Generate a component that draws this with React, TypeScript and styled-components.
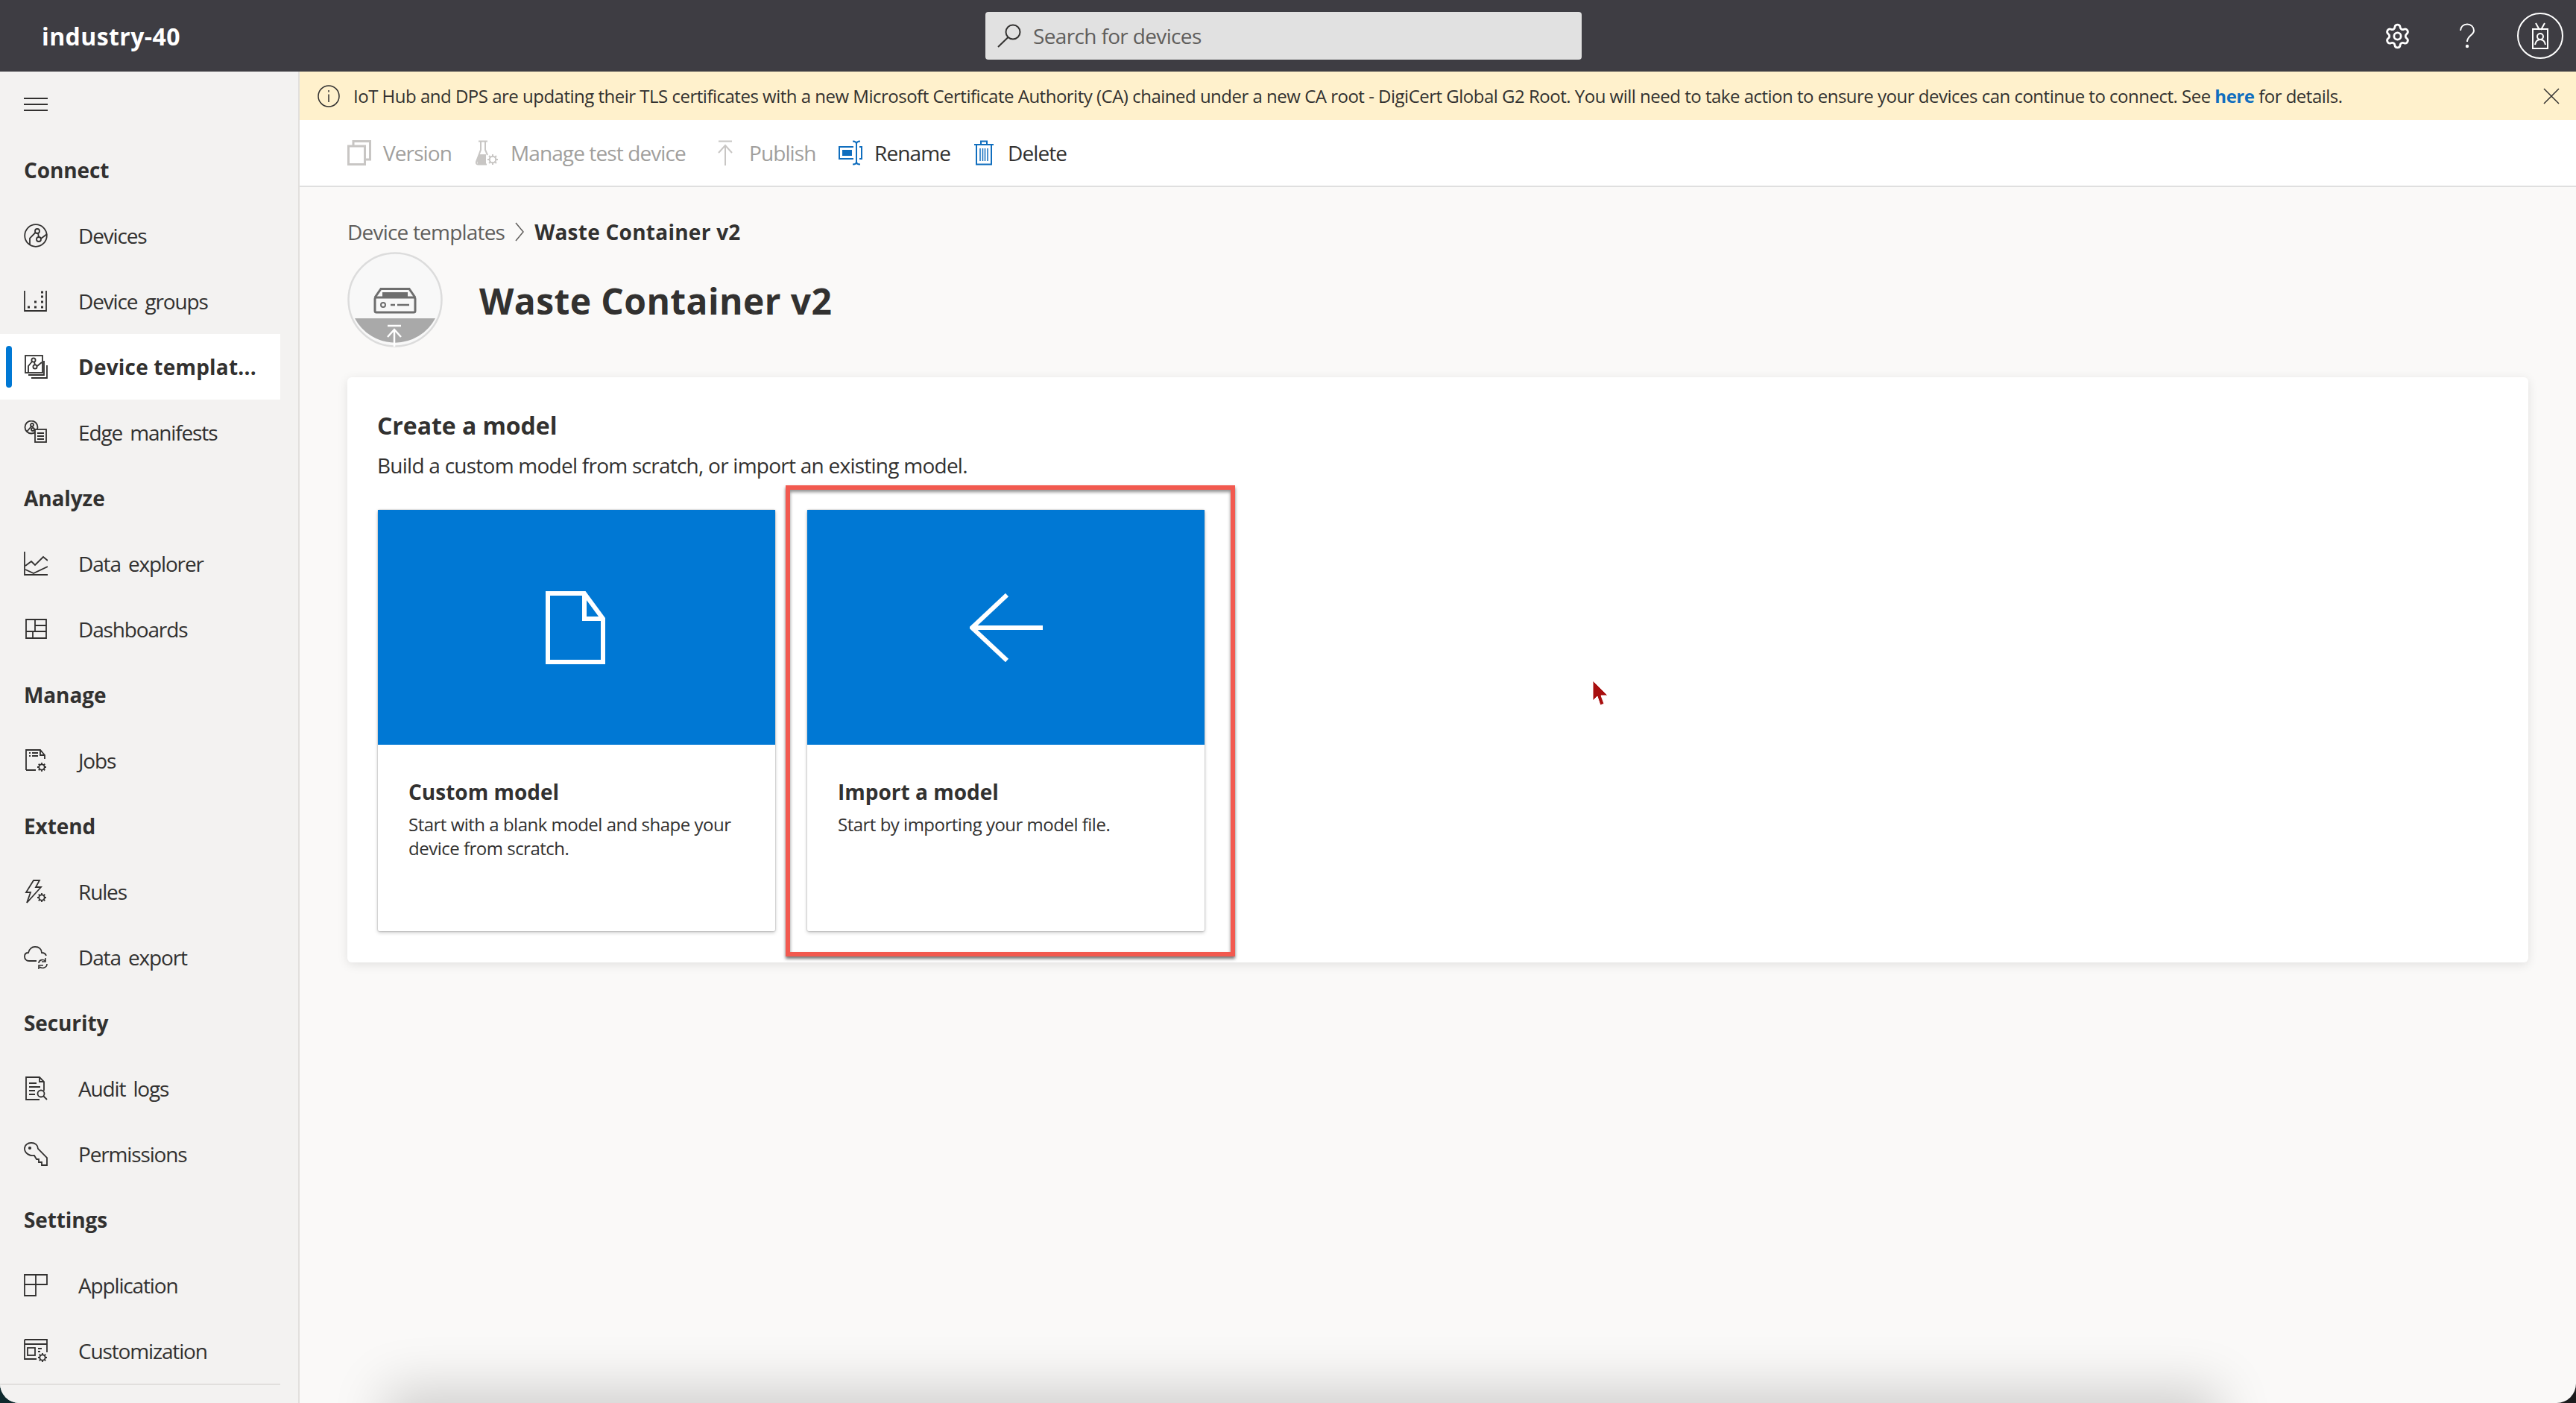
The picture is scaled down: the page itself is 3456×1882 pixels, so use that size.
import React from "react";
import styled, { createGlobalStyle } from "styled-components";
import { Settings } from "lucide-react";

const FONT = `"Open Sans", "Noto Sans", "Liberation Sans", sans-serif`;

const GlobalStyle = createGlobalStyle`
  html, body {
    margin: 0;
    padding: 0;
    width: 3456px;
    height: 1882px;
    overflow: hidden;
    background: linear-gradient(90deg, #0f2a2e 0%, #1c1b1d 100%);
  }
  * { box-sizing: border-box; }
`;

// little gear used by a few of the nav icons
function Cog({ cx, cy, r }: { cx: number; cy: number; r: number }) {
  const spokes = [0, 45, 90, 135];
  return (
    <g>
      <circle cx={cx} cy={cy} r={r * 0.62} fill="none" />
      {spokes.map((a) => {
        const dx = Math.cos((a * Math.PI) / 180) * r;
        const dy = Math.sin((a * Math.PI) / 180) * r;
        return <line key={a} x1={cx - dx} y1={cy - dy} x2={cx + dx} y2={cy + dy} strokeDasharray={`${r * 0.5} ${r}`} />;
      })}
    </g>
  );
}

function NavSvg({ children }: { children: React.ReactNode }) {
  return (
    <svg width="32" height="32" viewBox="0 0 32 32" fill="none" stroke="#323130" strokeWidth="1.8">
      {children}
    </svg>
  );
}

const DevicesIcon = () => (
  <NavSvg>
    <circle cx="16" cy="16" r="14.8" />
    <circle cx="18" cy="10" r="3" />
    <circle cx="20" cy="21" r="3" />
    <path d="M8 29V19.5L15.5 12M19 13l1 5M23 20l8-6" />
  </NavSvg>
);
const GroupsIcon = () => (
  <NavSvg>
    <path d="M1 2V29H30V2" />
    <path d="M5 24h3M14 24h3M14 17h3M23 24h3M23 17h3M23 10h3M23 4h3" strokeWidth="3" />
  </NavSvg>
);
const TemplatesIcon = () => (
  <NavSvg>
    <rect x="2" y="1" width="23" height="23" />
    <circle cx="13" cy="7" r="2.6" />
    <circle cx="15" cy="16" r="2.6" />
    <path d="M6 24V15L11 9M14 10l1 3.500M18 15l6-5M27 8V27H6M31 14V31H10" />
  </NavSvg>
);
const EdgeIcon = () => (
  <NavSvg>
    <circle cx="10" cy="9" r="8.5" />
    <circle cx="11" cy="6" r="2" />
    <circle cx="12" cy="12" r="2" />
    <path d="M4 15l6-7" />
    <rect x="15" y="12" width="15" height="17" fill="#f3f2f1" />
    <path d="M18 17h9M18 21h9M18 25h9" />
  </NavSvg>
);
const ExplorerIcon = () => (
  <NavSvg>
    <path d="M1 0V31H32" />
    <path d="M2 19l8-6 5 5 11-11 6 5" />
    <path d="M2 24l11 5 19-9" />
  </NavSvg>
);
const DashboardsIcon = () => (
  <NavSvg>
    <path d="M3 3H30V28H3ZM3 19H30M15 3V19M15 11H30M12 19V28" />
  </NavSvg>
);
const JobsIcon = () => (
  <NavSvg>
    <path d="M3 29V2H22L28 9V14M3 29H16M22 2V9H28" />
    <path d="M7 6h2M7 10h2M11 6h8M11 10h8" />
    <Cog cx={24} cy={25} r={6} />
  </NavSvg>
);
const RulesIcon = () => (
  <NavSvg>
    <path d="M13 1H21L16 10H23L4 31L9 17H3Z" />
    <Cog cx={24} cy={24} r={6} />
  </NavSvg>
);
const ExportIcon = () => (
  <NavSvg>
    <path d="M17 21H7C3 21 1 18 1 15C1 12 3 10 6 10C7 5 11 2 15 2C20 2 24 5 24 10C27 10 29 11 30 14" />
    <path d="M20 24C20 20 25 18 29 21M31 25C31 30 25 32 21 29M29 17V22H24M20 33V27H26" strokeWidth="1.6" />
  </NavSvg>
);
const AuditIcon = () => (
  <NavSvg>
    <path d="M27 19V7L21 1H3V31H21M21 1V7H27" />
    <path d="M7 9H17M7 14H22M7 19H15M7 24H15" />
    <circle cx="23" cy="23" r="4.5" />
    <path d="M26 26l5 5" />
  </NavSvg>
);
const KeyIcon = () => (
  <NavSvg>
    <path d="M1 9C1 4 5 1 10 1C15 1 19 4 19 9L31 21V31H24V27H20V23H17L14 18C8 19 1 15 1 9Z" />
    <circle cx="8" cy="8" r="1.200" fill="#323130" />
  </NavSvg>
);
const ApplicationIcon = () => (
  <NavSvg>
    <path d="M1 2H31V15H16V30H1ZM1 15H16M16 2V15" />
  </NavSvg>
);
const CustomizationIcon = () => (
  <NavSvg>
    <path d="M1 1H31V18M1 1V27H17M1 7H31" />
    <rect x="5" y="12" width="10" height="10" />
    <path d="M19 13h5M19 17h3" />
    <Cog cx={25} cy={25} r={6} />
  </NavSvg>
);

type NavEntry =
  | { heading: string }
  | { label: string; icon: React.ComponentType; active?: boolean };

const NAV: NavEntry[] = [
  { heading: "Connect" },
  { label: "Devices", icon: DevicesIcon },
  { label: "Device groups", icon: GroupsIcon },
  { label: "Device templat...", icon: TemplatesIcon, active: true },
  { label: "Edge manifests", icon: EdgeIcon },
  { heading: "Analyze" },
  { label: "Data explorer", icon: ExplorerIcon },
  { label: "Dashboards", icon: DashboardsIcon },
  { heading: "Manage" },
  { label: "Jobs", icon: JobsIcon },
  { heading: "Extend" },
  { label: "Rules", icon: RulesIcon },
  { label: "Data export", icon: ExportIcon },
  { heading: "Security" },
  { label: "Audit logs", icon: AuditIcon },
  { label: "Permissions", icon: KeyIcon },
  { heading: "Settings" },
  { label: "Application", icon: ApplicationIcon },
  { label: "Customization", icon: CustomizationIcon },
];

export default function App() {
  return (
    <>
      <GlobalStyle />
      <Frame>
        <TopBar>
          <Brand>industry-40</Brand>
          <SearchBox>
            <svg width="36" height="32" viewBox="0 0 36 32" fill="none" stroke="#323130" strokeWidth="2">
              <circle cx="22" cy="11" r="9.500" />
              <path d="M15.500 18L2 31" />
            </svg>
            <SearchText>Search for devices</SearchText>
          </SearchBox>
          <TopActions>
            <Settings size={37} color="#fff" strokeWidth={1.8} />
            <svg width="22" height="34" viewBox="0 0 22 34" fill="none" stroke="#fff" strokeWidth="2">
              <path d="M2 10C2 5 6 1.500 11 1.500C16 1.500 20 5 20 10C20 16 11 17 11 25" />
              <circle cx="11" cy="31" r="1.200" fill="#fff" />
            </svg>
            <Avatar>
              <svg width="24" height="36" viewBox="0 0 24 36" fill="none" stroke="#fff" strokeWidth="2">
                <path d="M2 9H22V35H2ZM6 1l5 9M18 1l-5 9" />
                <circle cx="12" cy="19" r="4" />
                <path d="M5 30c1-5 4-7 7-7s6 2 7 7" />
              </svg>
            </Avatar>
          </TopActions>
        </TopBar>

        <Body>
          <Sidebar>
            <MenuRow>
              <svg width="32" height="20" viewBox="0 0 32 20" stroke="#323130" strokeWidth="2">
                <path d="M0 2H32M0 10H32M0 18H32" />
              </svg>
            </MenuRow>
            {NAV.map((entry) =>
              "heading" in entry ? (
                <NavHeading key={entry.heading}>{entry.heading}</NavHeading>
              ) : (
                <NavItem key={entry.label} $active={entry.active}>
                  <NavIconBox>
                    <entry.icon />
                  </NavIconBox>
                  <NavLabel $active={entry.active}>{entry.label}</NavLabel>
                </NavItem>
              )
            )}
            <NavDivider />
          </Sidebar>

          <Main>
            <Banner>
              <svg width="30" height="30" viewBox="0 0 30 30" fill="none" stroke="#323130" strokeWidth="1.500">
                <circle cx="15" cy="15" r="14" />
                <path d="M15 12.500V23M15 7V9.500" />
              </svg>
              <BannerText>
                IoT Hub and DPS are updating their TLS certificates with a new Microsoft Certificate Authority (CA)
                chained under a new CA root - DigiCert Global G2 Root. You will need to take action to ensure your
                devices can continue to connect. See <BannerLink>here</BannerLink> for details.
              </BannerText>
              <BannerClose>
                <svg width="22" height="22" viewBox="0 0 22 22" stroke="#323130" strokeWidth="1.500">
                  <path d="M1 1L21 21M21 1L1 21" />
                </svg>
              </BannerClose>
            </Banner>

            <Toolbar>
              <ToolButton $disabled>
                <ToolIcon>
                  <svg width="32" height="34" viewBox="0 0 32 34" fill="none" stroke="#c8c6c4" strokeWidth="3">
                    <rect x="1.500" y="8" width="22" height="24.500" />
                    <path d="M8 7V1.500H30.500V26H25" />
                  </svg>
                </ToolIcon>
                <ToolLabel $width={91}>Version</ToolLabel>
              </ToolButton>
              <ToolButton $disabled>
                <ToolIcon>
                  <svg width="32" height="34" viewBox="0 0 32 34" fill="none" stroke="#c8c6c4" strokeWidth="2">
                    <path d="M5 1.500H17M8 2V13L2 29C1.500 31 2.500 32.500 4 32.500H16M14 2V13L17 20" />
                    <path d="M2.500 26L6 19H15V32H4Z" fill="#c8c6c4" stroke="none" />
                    <g stroke="#c8c6c4">
                      <Cog cx={24} cy={26} r={7} />
                    </g>
                  </svg>
                </ToolIcon>
                <ToolLabel $width={240}>Manage test device</ToolLabel>
              </ToolButton>
              <ToolButton $disabled>
                <ToolIcon>
                  <svg width="32" height="34" viewBox="0 0 32 34" fill="none" stroke="#c8c6c4" strokeWidth="2">
                    <path d="M7 1.500H25M16 34V8M7 17L16 7L25 17" />
                  </svg>
                </ToolIcon>
                <ToolLabel $width={88}>Publish</ToolLabel>
              </ToolButton>
              <ToolButton>
                <ToolIcon>
                  <svg width="32" height="34" viewBox="0 0 32 34" fill="none" stroke="#106ebe" strokeWidth="2">
                    <path d="M20 9H1V25H20M28 9H31V25H28" />
                    <rect x="5" y="13" width="13" height="8" fill="#106ebe" stroke="none" />
                    <path d="M19 1.500C22 1.500 24 3 24 5V29C24 31 22 32.500 19 32.500M29 1.500C26 1.500 24 3 24 5M29 32.500C26 32.500 24 31 24 29" />
                  </svg>
                </ToolIcon>
                <ToolLabel $width={99}>Rename</ToolLabel>
              </ToolButton>
              <ToolButton>
                <ToolIcon>
                  <svg width="32" height="34" viewBox="0 0 32 34" fill="none" stroke="#106ebe" strokeWidth="2">
                    <path d="M3 6H29M12 6V1.500H20V6M6 6V32.500H26V6" />
                    <path d="M11 11V28M14.500 11V28M17.500 11V28M21 11V28" strokeWidth="1.500" />
                  </svg>
                </ToolIcon>
                <ToolLabel $width={80}>Delete</ToolLabel>
              </ToolButton>
            </Toolbar>

            <Content>
              <Breadcrumb>
                <CrumbLink>Device templates</CrumbLink>
                <svg width="14" height="26" viewBox="0 0 14 26" fill="none" stroke="#605e5c" strokeWidth="1.500">
                  <path d="M2 1L12 13L2 25" />
                </svg>
                <CrumbCurrent>Waste Container v2</CrumbCurrent>
              </Breadcrumb>

              <TitleRow>
                <svg width="128" height="128" viewBox="0 0 128 128" fill="none">
                  <circle cx="64" cy="64" r="62.500" fill="#f8f8f8" stroke="#dcdcdc" strokeWidth="2.500" />
                  <path d="M10 89H118A61 61 0 0 1 10 89Z" fill="#a9a9a9" />
                  <g stroke="#6e6e6e" strokeWidth="3">
                    <rect x="37" y="61" width="54" height="20" rx="2" />
                    <path d="M37 61L45 49.500H83L91 61" />
                  </g>
                  <path d="M47 54H81V61H47Z" fill="#6e6e6e" />
                  <circle cx="48" cy="71" r="3" stroke="#6e6e6e" strokeWidth="2" />
                  <path d="M58 71H64M67 71H83" stroke="#6e6e6e" strokeWidth="2.500" />
                  <path d="M54 99H72M63 127V104M54 114L63 104L72 114" stroke="#fff" strokeWidth="2.500" />
                </svg>
                <PageTitle>Waste Container v2</PageTitle>
              </TitleRow>

              <Card>
                <CardTitle>Create a model</CardTitle>
                <CardSubtitle>Build a custom model from scratch, or import an existing model.</CardSubtitle>
                <TileRow>
                  <Tile>
                    <TileArt>
                      <FileGlyph>
                        <svg width="80" height="98" viewBox="0 0 80 98" fill="none" stroke="#fff" strokeWidth="6">
                          <path d="M3 3H52L77 37V95H3ZM52 3V37H77" />
                        </svg>
                      </FileGlyph>
                    </TileArt>
                    <TileBody>
                      <TileTitle>Custom model</TileTitle>
                      <TileText>Start with a blank model and shape your device from scratch.</TileText>
                    </TileBody>
                  </Tile>
                  <Tile>
                    <TileArt>
                      <svg width="98" height="92" viewBox="0 0 98 92" fill="none" stroke="#fff" strokeWidth="6">
                        <path d="M98 46H4M50 2L3 46L50 90" />
                      </svg>
                    </TileArt>
                    <TileBody>
                      <TileTitle>Import a model</TileTitle>
                      <TileText>Start by importing your model file.</TileText>
                    </TileBody>
                    <Highlight />
                  </Tile>
                </TileRow>
              </Card>

              <Cursor>
                <svg width="24" height="36" viewBox="0 0 24 36">
                  <path d="M2 1V28L8 22L12 34L17 32L13 21H22Z" fill="#a80f0f" stroke="#fff" strokeWidth="1" />
                </svg>
              </Cursor>
            </Content>
            <BottomShade />
          </Main>
        </Body>
      </Frame>
    </>
  );
}

const Frame = styled.div`
  width: 3456px;
  height: 1882px;
  display: flex;
  flex-direction: column;
  overflow: hidden;
  border-radius: 0 0 26px 26px;
  background: #faf9f8;
  font-family: ${FONT};
  color: #323130;
`;

const TopBar = styled.header`
  height: 96px;
  flex: none;
  display: grid;
  grid-template-columns: 1322px 800px 1fr;
  align-items: center;
  background: #3e3d43;
`;

const Brand = styled.div`
  padding-left: 56px;
  font-size: 32px;
  font-weight: 700;
  letter-spacing: 0.4px;
  color: #fff;
`;

const SearchBox = styled.div`
  height: 64px;
  display: flex;
  align-items: center;
  gap: 13px;
  padding-left: 15px;
  background: #e1e1e1;
  border-radius: 4px;
`;

const SearchText = styled.span`
  font-size: 28px;
  letter-spacing: -0.65px;
  color: #605e5c;
`;

const TopActions = styled.div`
  display: flex;
  align-items: center;
  justify-content: flex-end;
  gap: 64px;
  padding-right: 17px;
`;

const Avatar = styled.div`
  width: 62px;
  height: 62px;
  margin-left: -8px;
  display: flex;
  align-items: center;
  justify-content: center;
  border: 2px solid #fff;
  border-radius: 50%;
`;

const Body = styled.div`
  flex: 1;
  min-height: 0;
  display: flex;
`;

const Sidebar = styled.nav`
  width: 402px;
  flex: none;
  background: #f3f2f1;
  border-right: 2px solid #e1dfdd;
`;

const MenuRow = styled.div`
  height: 88px;
  width: 376px;
  display: flex;
  align-items: center;
  padding-left: 32px;
`;

const NavHeading = styled.div`
  height: 88px;
  width: 376px;
  display: flex;
  align-items: center;
  padding-left: 32px;
  font-size: 28px;
  font-weight: 700;
  letter-spacing: -0.1px;
`;

const NavItem = styled.div<{ $active?: boolean }>`
  position: relative;
  height: 88px;
  width: 376px;
  display: flex;
  align-items: center;
  padding-left: 32px;
  background: ${(p) => (p.$active ? "#fff" : "transparent")};

  &::before {
    content: "";
    display: ${(p) => (p.$active ? "block" : "none")};
    position: absolute;
    left: 8px;
    top: 16px;
    width: 8px;
    height: 56px;
    border-radius: 4px;
    background: #0078d4;
  }
`;

const NavIconBox = styled.span`
  width: 32px;
  height: 32px;
  flex: none;
  display: flex;
`;

const NavLabel = styled.span<{ $active?: boolean }>`
  margin-left: 41px;
  font-size: 28px;
  font-weight: ${(p) => (p.$active ? 700 : 400)};
  letter-spacing: ${(p) => (p.$active ? "0.2px" : "-1.15px")};
  word-spacing: ${(p) => (p.$active ? "0" : "4px")};
  white-space: nowrap;
`;

const NavDivider = styled.div`
  width: 376px;
  height: 2px;
  background: #e1dfdd;
`;

const Main = styled.main`
  position: relative;
  flex: 1;
  min-width: 0;
  display: flex;
  flex-direction: column;
  overflow: hidden;
`;

const Banner = styled.div`
  height: 65px;
  flex: none;
  display: flex;
  align-items: center;
  padding-left: 24px;
  background: #fff1cc;
`;

const BannerText = styled.div`
  margin-left: 18px;
  font-size: 24px;
  letter-spacing: -0.5px;
  white-space: nowrap;
`;

const BannerLink = styled.span`
  font-weight: 700;
  color: #106ebe;
`;

const BannerClose = styled.span`
  margin-left: auto;
  margin-right: 22px;
  display: flex;
`;

const Toolbar = styled.div`
  height: 90px;
  flex: none;
  display: flex;
  align-items: center;
  gap: 32px;
  padding-left: 64px;
  background: #fff;
  border-bottom: 2px solid #dfdfdf;
`;

const ToolButton = styled.div<{ $disabled?: boolean }>`
  display: flex;
  align-items: center;
  gap: 16px;
  color: ${(p) => (p.$disabled ? "#a19f9d" : "#323130")};
`;

const ToolIcon = styled.span`
  width: 32px;
  height: 34px;
  display: flex;
`;

const ToolLabel = styled.span<{ $width: number }>`
  width: ${(p) => p.$width}px;
  font-size: 28px;
  letter-spacing: -0.9px;
  white-space: nowrap;
`;

const Content = styled.div`
  position: relative;
  flex: 1;
  padding: 42px 64px 0;
`;

const Breadcrumb = styled.div`
  height: 36px;
  display: flex;
  align-items: center;
  gap: 13px;
  font-size: 28px;
`;

const CrumbLink = styled.span`
  letter-spacing: -0.8px;
  color: #605e5c;
`;

const CrumbCurrent = styled.span`
  font-weight: 700;
  letter-spacing: 0.25px;
`;

const TitleRow = styled.div`
  margin-top: 9px;
  height: 128px;
  display: flex;
  align-items: center;
  gap: 49px;
`;

const PageTitle = styled.h1`
  margin: 2px 0 0;
  font-size: 48px;
  font-weight: 700;
  letter-spacing: 0.4px;
`;

const Card = styled.section`
  margin-top: 40px;
  height: 785px;
  padding: 45px 40px 0;
  background: #fff;
  border-radius: 6px;
  box-shadow: 0 3px 14px rgba(0, 0, 0, 0.1);
`;

const CardTitle = styled.h2`
  margin: 0;
  height: 40px;
  line-height: 40px;
  font-size: 32px;
  font-weight: 700;
  letter-spacing: -0.05px;
`;

const CardSubtitle = styled.p`
  margin: 15px 0 0;
  height: 36px;
  line-height: 36px;
  font-size: 28px;
  letter-spacing: -0.75px;
`;

const TileRow = styled.div`
  margin-top: 42px;
  margin-left: 1px;
  display: flex;
  gap: 43px;
`;

const Tile = styled.article`
  position: relative;
  width: 533px;
  height: 565px;
  background: #fff;
  border-radius: 2px;
  box-shadow: 0 0 2px rgba(0, 0, 0, 0.35), 0 2px 5px rgba(0, 0, 0, 0.22);
`;

const TileArt = styled.div`
  height: 315px;
  display: flex;
  align-items: center;
  justify-content: center;
  background: #0078d4;
`;

const FileGlyph = styled.span`
  display: flex;
  margin-right: 4px;
`;

const TileBody = styled.div`
  padding: 45px 41px 0;
`;

const TileTitle = styled.h3`
  margin: 0;
  height: 36px;
  line-height: 36px;
  font-size: 28px;
  font-weight: 700;
  letter-spacing: 0px;
`;

const TileText = styled.p`
  margin: 10px 0 0;
  font-size: 24px;
  line-height: 32px;
  letter-spacing: -0.5px;
`;

const Highlight = styled.div`
  position: absolute;
  top: -33px;
  right: -41px;
  bottom: -34px;
  left: -29px;
  border: 6px solid #f2594f;
  box-shadow: 0 3px 4px rgba(0, 0, 0, 0.55), inset 0 3px 4px rgba(0, 0, 0, 0.45);
  pointer-events: none;
`;

const Cursor = styled.div`
  position: absolute;
  left: 1733px;
  top: 661px;
`;

const BottomShade = styled.div`
  position: absolute;
  left: 135px;
  width: 2420px;
  top: 1786px;
  height: 80px;
  background: #dcdcdc;
  box-shadow: 0 0 70px 20px rgba(0, 0, 0, 0.17);
`;
